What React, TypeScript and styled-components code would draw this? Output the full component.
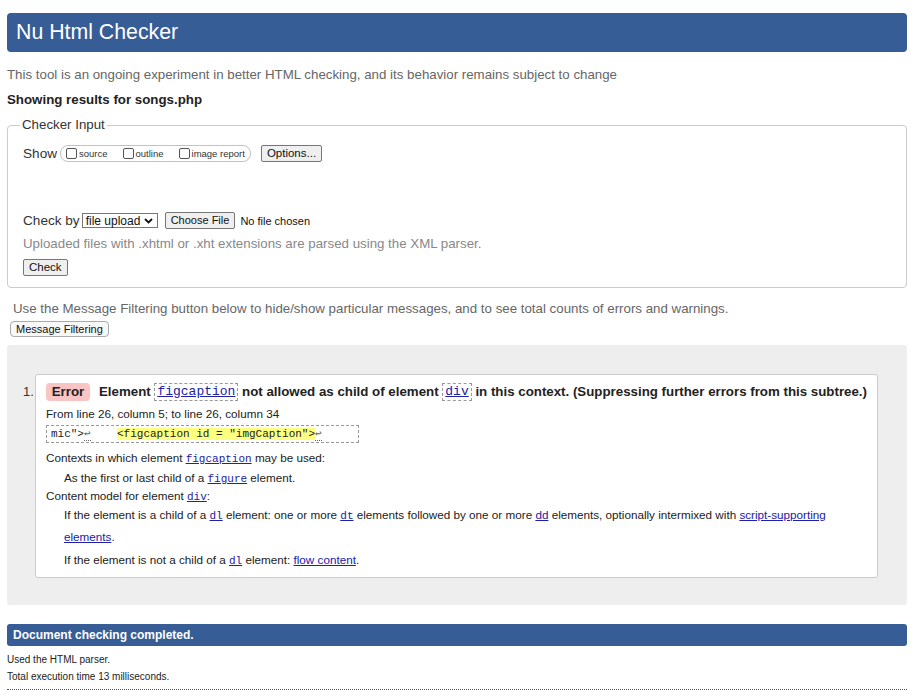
import styled, { createGlobalStyle } from "styled-components"

const GlobalStyle = createGlobalStyle`
  html, body {
    margin: 0;
    padding: 0;
    background: #fff;
  }
  body {
    font-family: "Liberation Sans", Arial, Helvetica, sans-serif;
    color: #222;
  }
`

const BLUE = "#365d95"
const LINK = "#2020a8"

const Page = styled.div`
  width: 900px;
  padding: 13px 0 0 7px;
`

const TitleBar = styled.header`
  height: 39px;
  background: ${BLUE};
  border-radius: 4px;
  display: flex;
  align-items: center;
  padding-left: 9px;
  color: #fff;
  font-size: 21.3px;
`

const Intro = styled.p<{ $top: number; $left?: number; $color?: string }>`
  margin: ${({ $top }) => $top}px 0 0 ${({ $left }) => $left || 0}px;
  font-size: 13.3px;
  line-height: 16px;
  color: ${({ $color }) => $color || "#666"};
`

const Showing = styled.p`
  margin: 9px 0 0;
  font-size: 13.3px;
  line-height: 16px;
  font-weight: bold;
  color: #222;
`

const Fieldset = styled.fieldset`
  margin: 9px 0 0;
  padding: 0 15px 11px;
  border: 1px solid #ccc;
  border-radius: 4px;
  min-width: 0;
`

const Legend = styled.legend`
  margin-left: -3px;
  padding: 0 2px;
  font-size: 13.3px;
  line-height: 16px;
  color: #333;
`

const Row = styled.div<{ $top: number }>`
  display: flex;
  align-items: center;
  margin-top: ${({ $top }) => $top}px;
  height: 17px;
`

const Label = styled.span`
  font-size: 13.6px;
  color: #333;
`

const CheckGroup = styled.div`
  display: flex;
  align-items: center;
  gap: 15px;
  height: 15px;
  margin-left: 3px;
  padding: 0 5px;
  border: 1px solid #c3c3c3;
  border-radius: 8px;
`

const CheckItem = styled.label`
  display: flex;
  align-items: center;
  gap: 2px;
  font-size: 9.5px;
  color: #333;
`

const Box = styled.input`
  appearance: none;
  margin: 0;
  width: 11px;
  height: 11px;
  border: 1px solid #555;
  border-radius: 2px;
  background: #fff;
`

const Button = styled.button<{ $round?: boolean; $left?: number; $size?: number }>`
  margin: 0 0 0 ${({ $left }) => $left || 0}px;
  height: 17px;
  padding: 0 5px;
  font-family: "Liberation Sans", Arial, sans-serif;
  font-size: ${({ $size }) => $size || 11.5}px;
  color: #111;
  background: ${({ $round }) => ($round ? "#f8f8f8" : "#efefef")};
  border: 1px solid ${({ $round }) => ($round ? "#aaa" : "#767676")};
  border-radius: ${({ $round }) => ($round ? "4px" : "2px")};
  line-height: 15px;
`

const SelectBox = styled.div`
  display: flex;
  align-items: center;
  justify-content: space-between;
  width: 76px;
  height: 15px;
  margin-left: 2px;
  box-sizing: border-box;
  padding: 0 4px 0 3px;
  border: 1px solid #767676;
  font-size: 12px;
  color: #111;
`

const NoFile = styled.span`
  margin-left: 5px;
  font-size: 11px;
  color: #111;
`

const Block = styled.div<{ $top: number }>`
  display: flex;
  margin-top: ${({ $top }) => $top}px;
`

const Filter = styled(Button)`
  font-size: 11px;
  height: 16px;
  padding: 0 5px;
  margin-left: 3px;
`

const Panel = styled.div`
  margin-top: 8px;
  background: #eee;
  border-radius: 3px;
  padding: 29px 29px 27px 16px;
  display: flex;
`

const Marker = styled.div`
  width: 13px;
  margin-top: 10px;
  font-size: 13px;
  line-height: 16px;
  color: #333;
`

const Card = styled.div`
  flex: 1;
  background: #fff;
  border: 1px solid #ccc;
  border-radius: 3px;
  padding: 8px 10px 6px;
`

const Headline = styled.p`
  margin: 0;
  display: flex;
  align-items: center;
  font-size: 13.3px;
  line-height: 18px;
  font-weight: bold;
  white-space: pre;
  color: #222;
`

const Badge = styled.span`
  display: inline-block;
  width: 44px;
  height: 18px;
  line-height: 18px;
  text-align: center;
  background: #f8c4c4;
  border-radius: 4px;
  margin-right: 9px;
`

const CodeBox = styled.code`
  display: inline-block;
  padding: 0 2px;
  border: 1px dashed #999;
  font-family: "Liberation Mono", "DejaVu Sans Mono", monospace;
  font-weight: normal;
  font-size: 13px;
  line-height: 16px;
`

const CodeLink = styled.a<{ $size?: number }>`
  font-family: "Liberation Mono", "DejaVu Sans Mono", monospace;
  font-size: ${({ $size }) => $size || 11}px;
  line-height: 1;
  color: ${LINK};
  text-decoration: underline;
`

const TextLink = styled.a`
  line-height: 1;
  color: ${LINK};
  text-decoration: underline;
`

const Para = styled.p<{ $top: number; $indent?: boolean; $lh?: number }>`
  margin: ${({ $top }) => $top}px 0 0 ${({ $indent }) => ($indent ? 18 : 0)}px;
  font-size: 11.7px;
  line-height: ${({ $lh }) => $lh || 16}px;
  color: #222;
`

const Extract = styled.div`
  display: inline-block;
  margin-top: 3px;
  height: 16px;
  padding: 0 36px 0 4px;
  border: 1px dashed #999;
  font-family: "Liberation Mono", "DejaVu Sans Mono", monospace;
  font-size: 11px;
  line-height: 16px;
  white-space: pre;
  color: #222;
`

const Mark = styled.mark`
  background: #ffff80;
  color: #222;
`

const Lf = styled.span`
  color: #666;
  border-bottom: 1px dotted #666;
`

const DoneBar = styled.div`
  margin-top: 19px;
  height: 22px;
  background: ${BLUE};
  border-radius: 3px;
  display: flex;
  align-items: center;
  padding-left: 6px;
  color: #fff;
  font-size: 12px;
  font-weight: bold;
`

const Small = styled.p<{ $top: number }>`
  margin: ${({ $top }) => $top}px 0 0;
  font-size: 10px;
  line-height: 14px;
  color: #222;
`

const Rule = styled.hr`
  margin: 5px 0 0;
  border: 0;
  border-top: 1px dotted #555;
`

const Chevron = () => (
  <svg width="9" height="6" viewBox="0 0 9 6">
    <path d="M1 1 L4.5 4.5 L8 1" fill="none" stroke="#111" strokeWidth="1.8" />
  </svg>
)

export default function App() {
  return (
    <>
      <GlobalStyle />
      <Page>
        <TitleBar>Nu Html Checker</TitleBar>
        <Intro $top={15}>
          This tool is an ongoing experiment in better HTML checking, and its behavior remains subject to change
        </Intro>
        <Showing>Showing results for songs.php</Showing>

        <Fieldset>
          <Legend>Checker Input</Legend>
          <Row $top={12}>
            <Label>Show</Label>
            <CheckGroup>
              <CheckItem>
                <Box type="checkbox" />
                source
              </CheckItem>
              <CheckItem>
                <Box type="checkbox" />
                outline
              </CheckItem>
              <CheckItem>
                <Box type="checkbox" />
                image report
              </CheckItem>
            </CheckGroup>
            <Button $left={10}>Options...</Button>
          </Row>
          <Row $top={50}>
            <Label>Check by</Label>
            <SelectBox>
              file upload
              <Chevron />
            </SelectBox>
            <Button $left={7} $size={11}>Choose File</Button>
            <NoFile>No file chosen</NoFile>
          </Row>
          <Intro $top={7} $color="#888">
            Uploaded files with .xhtml or .xht extensions are parsed using the XML parser.
          </Intro>
          <Block $top={7}>
            <Button>Check</Button>
          </Block>
        </Fieldset>

        <Intro $top={13} $left={6}>
          Use the Message Filtering button below to hide/show particular messages, and to see total counts of errors and warnings.
        </Intro>
        <Block $top={4}>
          <Filter $round>Message Filtering</Filter>
        </Block>

        <Panel>
          <Marker>1.</Marker>
          <Card>
            <Headline>
              <Badge>Error</Badge>
              {"Element "}
              <CodeBox>
                <CodeLink $size={13}>figcaption</CodeLink>
              </CodeBox>
              {" not allowed as child of element "}
              <CodeBox>
                <CodeLink $size={13}>div</CodeLink>
              </CodeBox>
              {" in this context. (Suppressing further errors from this subtree.)"}
            </Headline>
            <Para $top={5}>From line 26, column 5; to line 26, column 34</Para>
            <Extract>
              {'mic">'}
              <Lf>↩</Lf>
              {"    "}
              <Mark>{'<figcaption id = "imgCaption">'}</Mark>
              <Lf>↩</Lf>
            </Extract>
            <Para $top={7}>
              Contexts in which element <CodeLink>figcaption</CodeLink> may be used:
            </Para>
            <Para $top={4} $indent>
              As the first or last child of a <CodeLink>figure</CodeLink> element.
            </Para>
            <Para $top={2}>
              Content model for element <CodeLink>div</CodeLink>:
            </Para>
            <Para $top={0} $indent $lh={22}>
              If the element is a child of a <CodeLink>dl</CodeLink> element: one or more{" "}
              <CodeLink>dt</CodeLink> elements followed by one or more <TextLink>dd</TextLink>{" "}
              elements, optionally intermixed with <TextLink>script-supporting elements</TextLink>.
            </Para>
            <Para $top={1} $indent $lh={22}>
              If the element is not a child of a <CodeLink>dl</CodeLink> element:{" "}
              <TextLink>flow content</TextLink>.
            </Para>
          </Card>
        </Panel>

        <DoneBar>Document checking completed.</DoneBar>
        <Small $top={7}>Used the HTML parser.</Small>
        <Small $top={3}>Total execution time 13 milliseconds.</Small>
        <Rule />
      </Page>
    </>
  )
}
